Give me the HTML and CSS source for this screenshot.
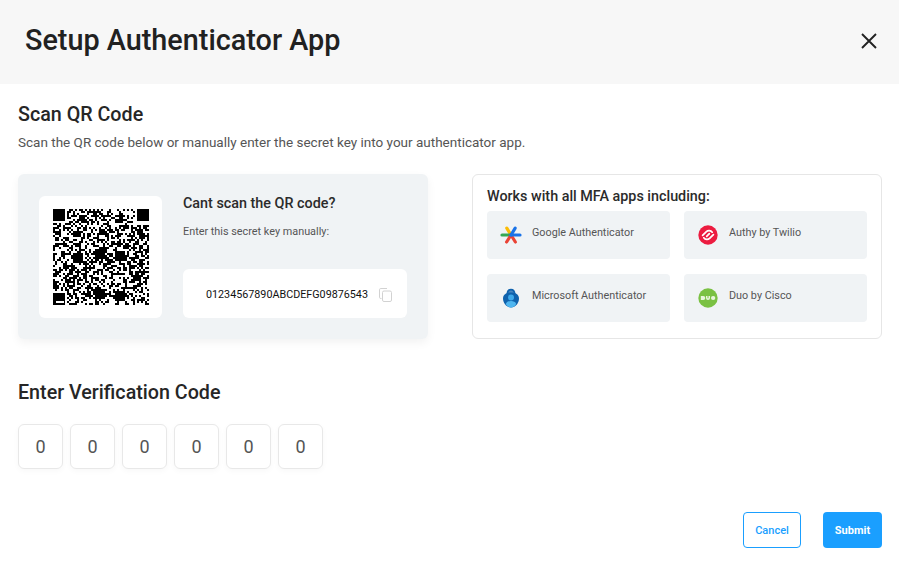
FILE: index.html
```html
<!DOCTYPE html>
<html lang="en">
<head>
  <meta charset="UTF-8" />
  <meta name="viewport" content="width=device-width, initial-scale=1.0"/>
  <title>Setup Authenticator App</title>
  <link rel="stylesheet" href="styles.css">
</head>
<body>

  <!-- Header -->
  <header class="modal-header">
    <h1>Setup Authenticator App</h1>
    <button class="close-btn" aria-label="Close">
      <svg width="16" height="16" viewBox="0 0 16 16"><path d="M1 1L15 15M15 1L1 15" stroke="#222" stroke-width="1.9" fill="none"/></svg>
    </button>
  </header>

  <main class="modal-body">
    <h2>Scan QR Code</h2>
    <p class="intro">Scan the QR code below or manually enter the secret key into your authenticator app.</p>

    <div class="columns">
      <!-- QR card -->
      <section class="qr-card">
        <div class="qr-box">
          <svg id="qrCode" width="96" height="96" viewBox="0 0 48 48" shape-rendering="crispEdges"></svg>
        </div>
        <div class="qr-side">
          <h3>Cant scan the QR code?</h3>
          <p class="key-label">Enter this secret key manually:</p>
          <div class="key-box">
            <span>01234567890ABCDEFG09876543</span>
            <svg width="13" height="14" viewBox="0 0 13 14" fill="none" stroke="#d2d2d2" stroke-width="1">
              <path d="M2.5 10.5H1.8A1.3 1.3 0 0 1 .5 9.2V1.8A1.3 1.3 0 0 1 1.8 .5H8"/>
              <rect x="3.5" y="3" width="9" height="10.5" rx="1.5"/>
            </svg>
          </div>
        </div>
      </section>

      <!-- Supported apps -->
      <section class="apps-panel">
        <h3>Works with all MFA apps including:</h3>
        <div class="apps-grid">
          <div class="app-tile">
            <svg width="22" height="22" viewBox="0 0 22 22" fill="none" stroke-width="3.2" stroke-linecap="round">
              <path d="M11 11L6.8 4.2" stroke="#fbbc04"/>
              <path d="M11 11H2" stroke="#34a853"/>
              <path d="M11 11L6.6 18" stroke="#ea4335"/>
              <path d="M11 11L15.4 18" stroke="#ea4335"/>
              <path d="M11 11H20" stroke="#1a73e8"/>
              <path d="M11 11L15.2 4.2" stroke="#1a73e8"/>
            </svg>
            <span>Google Authenticator</span>
          </div>
          <div class="app-tile">
            <svg width="22" height="22" viewBox="0 0 22 22" fill="none" stroke="#fff" stroke-width="1.7" stroke-linecap="round">
              <circle cx="11" cy="11" r="9.7" fill="#ec1c40" stroke="none"/>
              <path d="M5.600 11.400L9.400 7.600C11 6 13.800 6.200 15.200 8.200"/>
              <path d="M16.400 10.600L12.600 14.400C11 16 8.200 15.800 6.800 13.800"/>
              <path d="M9.700 12.300L12.300 9.700"/>
            </svg>
            <span>Authy by Twilio</span>
          </div>
          <div class="app-tile">
            <svg width="22" height="22" viewBox="0 0 22 22">
              <path d="M7.300 7C7.500 4.300 9 2.600 11 2.600C13 2.600 14.500 4.300 14.700 7" fill="#4a86bf" stroke="#0f62ad" stroke-width="1.700"/>
              <path d="M11 5.500C6.500 5.500 3 7.500 3 11.500C3 16 6.500 20.500 11 20.500C15.500 20.500 19 16 19 11.500C19 7.500 15.500 5.500 11 5.500Z" fill="#0f62ad"/>
              <circle cx="11" cy="10.500" r="3" fill="#3fa9ea"/>
              <path d="M5.800 17C6.500 14.800 8.500 14 11 14C13.500 14 15.500 14.800 16.200 17C15 19.300 13.200 20.500 11 20.500C8.800 20.500 7 19.300 5.800 17Z" fill="#4fb6f0"/>
            </svg>
            <span>Microsoft Authenticator</span>
          </div>
          <div class="app-tile">
            <svg width="22" height="22" viewBox="0 0 22 22">
              <circle cx="11" cy="11" r="9.700" fill="#7ac143"/>
              <path d="M3.800 9H6.300A2 2 0 0 1 6.300 13H3.800Z" fill="#e8f5dc"/>
              <path d="M9 9H10.500V11.200H11.500V9H13V11A2 2 0 0 1 9 11Z" fill="#e8f5dc"/>
              <rect x="14" y="9" width="4.300" height="4" rx="2" fill="#e8f5dc"/>
            </svg>
            <span>Duo by Cisco</span>
          </div>
        </div>
      </section>
    </div>

    <h2 class="code-title">Enter Verification Code</h2>
    <div class="code-row">
      <div class="code-cell">0</div>
      <div class="code-cell">0</div>
      <div class="code-cell">0</div>
      <div class="code-cell">0</div>
      <div class="code-cell">0</div>
      <div class="code-cell">0</div>
    </div>

    <div class="actions">
      <button class="btn btn-outline">Cancel</button>
      <button class="btn btn-solid">Submit</button>
    </div>
  </main>

  <script src="qr.js"></script>
</body>
</html>
```
FILE: styles.css
```css
* {
  margin: 0;
  padding: 0;
  box-sizing: border-box;
}

body {
  font-family: Roboto, 'Liberation Sans', sans-serif;
  background-color: #fff;
  color: #222;
  height: 567px;
  overflow: hidden;
}

.modal-header {
  height: 84px;
  background-color: #f7f7f7;
  display: flex;
  align-items: center;
  justify-content: space-between;
  padding: 0 22px 4px 25px;
}

.modal-header h1 {
  font-size: 28.8px;
  font-weight: 500;
  color: #212121;
}

.close-btn {
  background: none;
  border: none;
  cursor: pointer;
  display: flex;
  margin-top: 2px;
}

.modal-body {
  padding: 19px 17px 0 18px;
}

h2 {
  font-size: 19.7px;
  line-height: 24px;
  font-weight: 500;
  color: #262626;
}

.intro {
  font-size: 13.5px;
  line-height: 18px;
  color: #555;
  margin-top: 6px;
}

.columns {
  display: flex;
  justify-content: space-between;
  margin-top: 23px;
}

h3 {
  font-size: 14.35px;
  line-height: 18px;
  font-weight: 500;
  color: #2b2b2b;
}

/* QR card */
.qr-card {
  width: 410px;
  height: 165px;
  background-color: #f0f3f5;
  border-radius: 6px;
  box-shadow: 0 4px 10px rgba(0, 0, 0, 0.05);
  display: flex;
  gap: 21px;
  padding: 22px 21px 21px;
}

.qr-box {
  width: 123px;
  height: 122px;
  background-color: #fff;
  border-radius: 6px;
  display: flex;
  align-items: center;
  justify-content: center;
}

.qr-side {
  flex: 1;
  display: flex;
  flex-direction: column;
  margin-top: -1px;
}

.key-label {
  font-size: 10.85px;
  line-height: 14px;
  color: #555;
  margin-top: 12px;
}

.key-box {
  margin-top: auto;
  height: 49px;
  background-color: #fff;
  border-radius: 6px;
  display: flex;
  align-items: center;
  justify-content: space-between;
  padding: 2px 15px 0 23px;
  font-size: 10.75px;
  color: #111;
}

/* Supported apps */
.apps-panel {
  width: 410px;
  height: 165px;
  border: 1px solid #e6e6e6;
  border-radius: 6px;
  padding: 13px 14px 0;
}

.apps-grid {
  display: grid;
  grid-template-columns: 183px 183px;
  grid-auto-rows: 48px;
  column-gap: 14px;
  row-gap: 15px;
  margin-top: 5px;
}

.app-tile {
  background-color: #f0f3f5;
  border-radius: 4px;
  display: flex;
  align-items: flex-start;
  gap: 10px;
  padding: 13px 0 0 13px;
  font-size: 10.8px;
  line-height: 18px;
  color: #555;
}

/* Verification code */
.code-title {
  margin-top: 42px;
}

.code-row {
  display: flex;
  gap: 7px;
  margin-top: 19px;
}

.code-cell {
  width: 45px;
  height: 45px;
  border: 1px solid #e8e8e8;
  border-radius: 6px;
  box-shadow: 0 2px 6px rgba(0, 0, 0, 0.03);
  display: flex;
  align-items: center;
  justify-content: center;
  font-size: 18px;
  color: #555;
}

.actions {
  display: flex;
  justify-content: flex-end;
  gap: 22px;
  margin-top: 43px;
}

.btn {
  height: 36px;
  border-radius: 4px;
  font-family: inherit;
  font-size: 11px;
  font-weight: 700;
  cursor: pointer;
}

.btn-outline {
  width: 58px;
  background: #fff;
  border: 1px solid #1a9fff;
  color: #1a9fff;
  font-weight: 500;
}

.btn-solid {
  width: 59px;
  background: #1a9fff;
  border: none;
  color: #fff;
}
```
FILE: qr.js
```js
// placeholder QR: seeded noise plus the three finder squares
const size = 48;
let seed = 1234567;

function next() {
  seed = (seed * 1103515245 + 12345) & 0x7fffffff;
  return (seed >> 12) % 100;
}

let d = "";

for (let y = 0; y < size; y++) {
  for (let x = 0; x < size; x++) {
    if ((x < 7 && y < 7) || (x >= size - 7 && y < 7) || (x < 7 && y >= size - 7)) continue;
    if (next() < 52) d += `M${x} ${y}h1v1h-1z`;
  }
}

// finder squares, nearly solid at this scale
const finders = [[0, 0], [size - 6, 0], [0, size - 6]];
for (let [x, y] of finders) {
  d += `M${x} ${y}h6v6h-6z`;
}

// alignment blocks
const blocks = [[10, 22], [21, 20], [31, 21], [21, 40], [31, 41]];
for (let [x, y] of blocks) {
  d += `M${x} ${y}h5v5h-5z`;
}

document.getElementById("qrCode").innerHTML =
  `<path d="${d}" fill="#000"/><rect x="1.5" y="46" width="4" height="1" fill="#fff"/>`;
```
